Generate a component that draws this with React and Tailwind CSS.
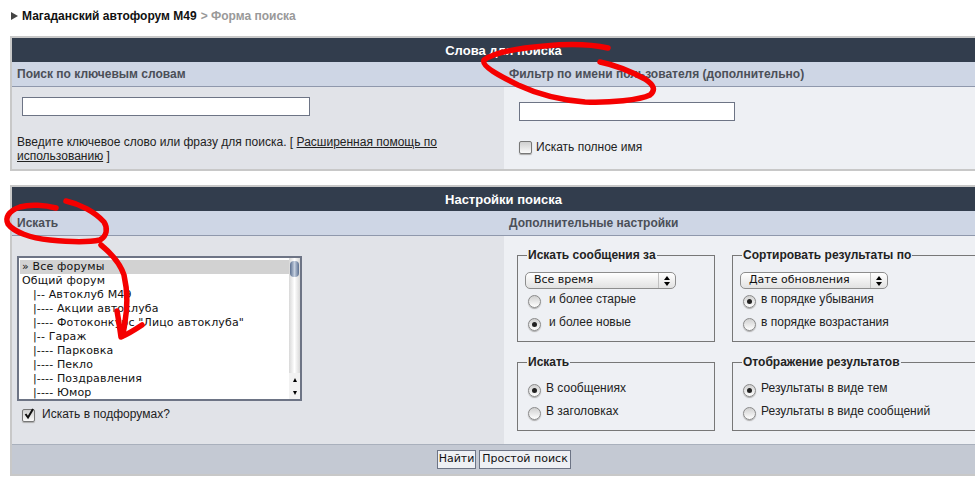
import React from "react"

const forums = [
  "Общий форум",
  "   |-- Автоклуб М49",
  "   |---- Акции автоклуба",
  "   |---- Фотоконкурс \"Лицо автоклуба\"",
  "   |-- Гараж",
  "   |---- Парковка",
  "   |---- Пекло",
  "   |---- Поздравления",
  "   |---- Юмор",
]

const Radio = ({ checked }) => (
  <span className="flex h-[13px] w-[13px] shrink-0 items-center justify-center rounded-full border border-[#8a8a8a] bg-gradient-to-b from-[#d0d0d0] to-white shadow-[0_1px_1px_#aaa]">
    {checked && <span className="h-[5px] w-[5px] rounded-full bg-[#222]" />}
  </span>
)

const RadioRow = ({ checked, label, gap = "gap-[5px]", className = "" }) => (
  <div className={`ml-[3px] flex h-[14px] items-center ${gap} ${className}`}>
    <Radio checked={checked} />
    <span className="relative top-[-2px] leading-[14px]">{label}</span>
  </div>
)

const CheckBox = ({ checked }) => (
  <span className="relative flex h-[13px] w-[13px] shrink-0 items-center justify-center rounded-[2px] border border-[#777] bg-gradient-to-b from-[#cfcfcf] to-[#fafafa] shadow-[0_1px_1px_#aaa]">
    {checked && (
      <svg viewBox="0 0 12 12" className="absolute left-[0px] top-[-2px] h-[12px] w-[12px]">
        <path d="M2.5 6 L5 9.5 L10 1" fill="none" stroke="#111" strokeWidth="2" />
      </svg>
    )}
  </span>
)

const MacSelect = ({ label, width }) => (
  <div className={`mt-[10px] flex h-[17px] ${width} items-center justify-between rounded-[5px] border border-[#8d8d8d] bg-gradient-to-b from-white via-[#f0f0f0] to-[#e2e2e2] font-['DejaVu_Sans',sans-serif] text-[11px] text-[#111]`}>
    <span className="pl-[8px]">{label}</span>
    <span className="flex h-full w-[17px] flex-col items-center justify-center gap-[2px] border-l border-[#c0c0c0]">
      <span className="h-0 w-0 border-x-[3px] border-b-[4px] border-x-transparent border-b-black" />
      <span className="h-0 w-0 border-x-[3px] border-t-[4px] border-x-transparent border-t-black" />
    </span>
  </div>
)

const Group = ({ title, children }) => (
  <fieldset className="border border-[#777] pl-[7px]">
    <legend className="ml-[2px] px-[1px] text-[12px] font-bold leading-[14px] text-[#222]">{title}</legend>
    {children}
  </fieldset>
)

const PanelHead = ({ title }) => (
  <div className="flex h-[24px] items-center justify-center bg-[#323d4d] pt-[1px] text-[13px] font-bold text-white">{title}</div>
)

const SubHead = ({ left, right }) => (
  <div className="flex h-[25px] border-b border-[#8f98ac] bg-[#ced6e5] text-[12px] font-bold text-[#4b4f58]">
    <div className="w-[492px] shrink-0 pl-[5px] leading-[24px]">{left}</div>
    <div className="pl-[5px] leading-[24px]">{right}</div>
  </div>
)

const Scribbles = () => (
  <svg viewBox="0 0 975 479" className="pointer-events-none absolute left-0 top-0 h-[479px] w-[975px]">
    <g fill="none" stroke="#f50000" strokeWidth="5.5" strokeLinecap="round" strokeLinejoin="round">
      <path d="M608 48 C590 44 565 44 545 46 C520 48 495 52 484 60 C481 66 500 76 518 85 C535 93 560 100 585 102 C610 103 640 100 650 95 C656 90 654 85 645 79 C630 71 615 65 600 62" />
      <path d="M56 208 C45 205 30 204 20 207 C8 211 5 218 8 224 C14 232 30 238 50 240 C70 242 90 242 100 240 C107 236 108 228 104 222 C95 212 80 204 66 201" />
      <path d="M101 245 C112 254 120 263 124 275 C128 292 127 310 125 322 C124 330 123 335 122 336" />
      <path d="M117 311 C119 322 120 330 121 337 C128 334 136 329 142 325" />
    </g>
  </svg>
)

export default function App() {
  return (
    <div className="relative h-[479px] w-[975px] overflow-hidden bg-white font-['Liberation_Sans',Arial,sans-serif] text-[12px] text-[#222]">
      <div className="flex h-[36px] items-start pl-[11px] pt-[9px] text-[12px] font-bold leading-[14px]">
        <span className="mr-[4px] mt-[3px] h-0 w-0 border-y-[4px] border-l-[7px] border-y-transparent border-l-[#444]" />
        <span className="text-[#111]">Магаданский автофорум М49</span>
        <span className="ml-[4px] text-[#999]">&gt; Форма поиска</span>
      </div>

      <section className="ml-[10px] w-[987px] border-2 border-[#c8c8c8]">
        <PanelHead title="Слова для поиска" />
        <SubHead left="Поиск по ключевым словам" right="Фильтр по имени пользователя (дополнительно)" />
        <div className="flex h-[82px]">
          <div className="w-[492px] shrink-0 bg-[#e1e3e8] pl-[5px] pt-[10px]">
            <input className="ml-[5px] block h-[19px] w-[288px] border border-[#6d7485] bg-white" />
            <p className="mt-[19px] w-[450px] leading-[14px]">
              Введите ключевое слово или фразу для поиска. [ <u>Расширенная помощь по использованию</u> ]
            </p>
          </div>
          <div className="flex-1 bg-[#eef0f4] pl-[15px] pt-[15px]">
            <input className="block h-[19px] w-[216px] border border-[#6d7485] bg-white" />
            <div className="mt-[17px] flex items-center gap-[4px]">
              <CheckBox />
              <span>Искать полное имя</span>
            </div>
          </div>
        </div>
      </section>

      <section className="ml-[10px] mt-[14px] w-[987px] border-2 border-[#c8c8c8]">
        <PanelHead title="Настройки поиска" />
        <SubHead left="Искать" right="Дополнительные настройки" />
        <div className="flex h-[208px]">
          <div className="w-[492px] shrink-0 bg-[#e1e3e8] pl-[5px] pt-[20px]">
            <div className="flex h-[145px] w-[285px] border-2 border-[#6d7485] bg-white font-['DejaVu_Sans',sans-serif] text-[11px] leading-[14px] text-[#111]">
              <div className="flex-1 overflow-hidden pl-[1px] pt-[1px] tracking-[0.15px]">
                <div className="mt-[1px] bg-[#d2d2d2] pl-[2px]">» Все форумы</div>
                {forums.map((f) => (
                  <div key={f} className="whitespace-pre pl-[2px]">{f}</div>
                ))}
              </div>
              <div className="relative w-[11px] bg-gradient-to-r from-[#d8d8d8] via-white to-[#d8d8d8]">
                <div className="mx-auto mt-[3px] h-[16px] w-[9px] rounded-[4px] bg-gradient-to-r from-[#5b6f8f] via-[#c5d0e0] to-[#5b6f8f]" />
                <div className="absolute bottom-0 left-0 flex h-[26px] w-full flex-col items-center justify-around bg-[#f2f2f2]">
                  <span className="h-0 w-0 border-x-[2px] border-b-[4px] border-x-transparent border-b-black" />
                  <span className="h-0 w-0 border-x-[2px] border-t-[4px] border-x-transparent border-t-black" />
                </div>
              </div>
            </div>
            <div className="ml-[5px] mt-[5px] flex items-center gap-[7px]">
              <CheckBox checked />
              <span className="relative top-[-1px]">Искать в подфорумах?</span>
            </div>
          </div>

          <div className="grid flex-1 grid-cols-[198px_260px] grid-rows-[94px_76px] gap-x-[17px] gap-y-[13px] bg-[#eef0f4] pl-[13px] pt-[12px]">
            <Group title="Искать сообщения за">
              <MacSelect label="Все время" width="w-[151px]" />
              <RadioRow gap="gap-[8px]" className="mt-[5px]" label="и более старые" />
              <RadioRow gap="gap-[8px]" className="mt-[9px]" checked label="и более новые" />
            </Group>
            <Group title="Сортировать результаты по">
              <MacSelect label="Дате обновления" width="w-[148px]" />
              <RadioRow className="mt-[5px]" checked label="в порядке убывания" />
              <RadioRow className="mt-[9px]" label="в порядке возрастания" />
            </Group>
            <Group title="Искать">
              <RadioRow className="mt-[14px]" checked label="В сообщениях" />
              <RadioRow className="mt-[9px]" label="В заголовках" />
            </Group>
            <Group title="Отображение результатов">
              <RadioRow className="mt-[14px]" checked label="Результаты в виде тем" />
              <RadioRow className="mt-[9px]" label="Результаты в виде сообщений" />
            </Group>
          </div>
        </div>
        <div className="flex h-[30px] items-center gap-[3px] border-t border-[#a9b0bc] bg-[#c4c9d3] pl-[425px] font-['DejaVu_Sans',sans-serif] text-[11px] text-[#111]">
          <button className="h-[19px] w-[39px] border border-[#6d7485] bg-[#eef0f4]">Найти</button>
          <button className="h-[19px] w-[92px] border border-[#6d7485] bg-[#eef0f4]">Простой поиск</button>
        </div>
      </section>

      <Scribbles />
    </div>
  )
}
